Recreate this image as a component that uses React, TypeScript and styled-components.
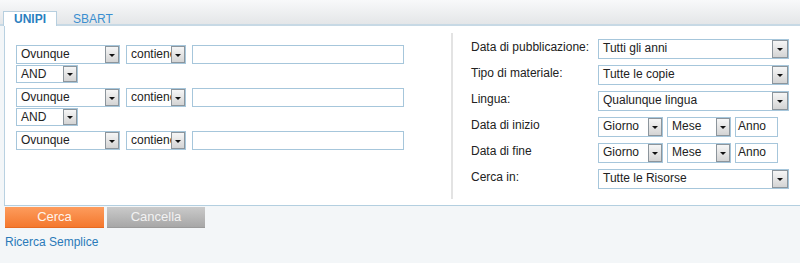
import React from "react";
import styled, { createGlobalStyle } from "styled-components";

const GlobalStyle = createGlobalStyle`
  html, body {
    margin: 0;
    padding: 0;
    background: #f3f6f8;
    font-family: "Liberation Sans", Arial, sans-serif;
    font-size: 12px;
    color: #222;
  }
`;

const Page = styled.div`
  width: 800px;
  height: 263px;
  overflow: hidden;
`;

const TabBar = styled.div`
  height: 24px;
  display: flex;
  align-items: flex-end;
  padding-left: 3px;
  background: linear-gradient(#f8f9fa, #e4e6e8);
  border-bottom: 2px solid #c7d9e5;
`;

const Tab = styled.div<{ $active?: boolean }>`
  box-sizing: border-box;
  height: 15px;
  line-height: 14px;
  margin-bottom: -2px;
  font-size: 12px;
  padding: ${(p) => (p.$active ? "0 10px" : "0 15px")};
  font-weight: ${(p) => (p.$active ? "bold" : "normal")};
  color: ${(p) => (p.$active ? "#2a7fc0" : "#3a8fd0")};
  background: ${(p) => (p.$active ? "#fff" : "transparent")};
  border: ${(p) => (p.$active ? "1px solid #b7cfdf" : "1px solid transparent")};
  border-bottom: none;
  position: relative;
`;

const Panel = styled.div`
  margin-left: 4px;
  height: 180px;
  box-sizing: border-box;
  background: #fff;
  border-left: 1px solid #b9d1e1;
  border-bottom: 1px solid #b3cfe0;
  display: grid;
  grid-template-columns: 446px 2px 1fr;
`;

const LeftCol = styled.div`
  padding: 19px 0 0 11px;
  display: flex;
  flex-direction: column;
  align-items: flex-start;
`;

const CondRow = styled.div<{ $first?: boolean }>`
  display: flex;
  align-items: flex-start;
  gap: 6px;
  margin-top: ${(p) => (p.$first ? "0" : "5px")};
`;

const Divider = styled.div`
  background: #e3e3e3;
  margin: 7px 0 6px;
`;

const RightCol = styled.div`
  padding: 13px 0 0 18px;
  display: flex;
  flex-direction: column;
  gap: 7px;
`;

const FieldRow = styled.div`
  display: flex;
  align-items: center;
  height: 19px;
`;

const Label = styled.div`
  width: 127px;
  flex: none;
  font-size: 12px;
  color: #222;
  margin-top: -3px;
`;

const DateGroup = styled.div`
  display: flex;
  gap: 4px;
`;

const SelectBox = styled.div<{ $w: number; $h: number; $mt?: number }>`
  position: relative;
  box-sizing: border-box;
  width: ${(p) => p.$w}px;
  height: ${(p) => p.$h}px;
  margin-top: ${(p) => p.$mt ?? 0}px;
  border: 1px solid #a6c6db;
  background: #fff;
  overflow: hidden;
  flex: none;
`;

const SelectText = styled.div`
  padding-left: 4px;
  font-size: 12px;
  line-height: 16px;
  color: #222;
  white-space: nowrap;
`;

const Arrow = styled.div<{ $w: number }>`
  position: absolute;
  top: 0;
  right: 0;
  bottom: 0;
  width: ${(p) => p.$w}px;
  box-sizing: border-box;
  border: 1px solid #8c959c;
  background: linear-gradient(#f6f6f6, #d4d4d4);
  display: flex;
  align-items: center;
  justify-content: center;
  &::after {
    content: "";
    border-left: 3px solid transparent;
    border-right: 3px solid transparent;
    border-top: 3px solid #111;
    margin-top: 1px;
  }
`;

const TextInput = styled.div<{ $w: number; $h: number }>`
  box-sizing: border-box;
  width: ${(p) => p.$w}px;
  height: ${(p) => p.$h}px;
  border: 1px solid #a6c6db;
  background: #fff;
  padding-left: 2px;
  font-size: 12px;
  line-height: 17px;
  color: #222;
  flex: none;
`;

const ButtonRow = styled.div`
  display: flex;
  gap: 3px;
  padding: 1px 0 0 5px;
`;

const Button = styled.div<{ $primary?: boolean }>`
  box-sizing: border-box;
  width: ${(p) => (p.$primary ? 99 : 98)}px;
  height: 21px;
  line-height: 20px;
  text-align: center;
  font-size: 13px;
  color: ${(p) => (p.$primary ? "#fff4ec" : "#f2f2f2")};
  background: ${(p) =>
    p.$primary
      ? "linear-gradient(#fd9c5d, #f4782e)"
      : "linear-gradient(#cacaca, #a7a7a7)"};
  border-bottom: 1px solid ${(p) => (p.$primary ? "#e66a22" : "#9a9a9a")};
`;

const Link = styled.a`
  display: block;
  margin: 7px 0 0 5px;
  font-size: 12px;
  line-height: 14px;
  color: #2a7ab8;
  text-decoration: none;
`;

type SelProps = { w: number; h: number; text: string; arrow?: number; mt?: number };
const Select = ({ w, h, text, arrow = 14, mt }: SelProps) => (
  <SelectBox $w={w} $h={h} $mt={mt}>
    <SelectText>{text}</SelectText>
    <Arrow $w={arrow} />
  </SelectBox>
);

const Condition = ({ first }: { first?: boolean }) => (
  <CondRow $first={first}>
    <Select w={104} h={19} text="Ovunque" />
    <Select w={60} h={19} text="contiene" />
    <TextInput $w={212} $h={19} />
  </CondRow>
);

export default function App() {
  return (
    <Page>
      <GlobalStyle />
      <TabBar>
        <Tab $active>UNIPI</Tab>
        <Tab>SBART</Tab>
      </TabBar>
      <Panel>
        <LeftCol>
          <Condition first />
          <Select w={62} h={18} text="AND" mt={1} />
          <Condition />
          <Select w={62} h={18} text="AND" mt={1} />
          <Condition />
        </LeftCol>
        <Divider />
        <RightCol>
          <FieldRow>
            <Label>Data di pubblicazione:</Label>
            <Select w={191} h={20} text="Tutti gli anni" arrow={16} />
          </FieldRow>
          <FieldRow>
            <Label>Tipo di materiale:</Label>
            <Select w={191} h={20} text="Tutte le copie" arrow={16} />
          </FieldRow>
          <FieldRow>
            <Label>Lingua:</Label>
            <Select w={191} h={20} text="Qualunque lingua" arrow={16} />
          </FieldRow>
          <FieldRow>
            <Label>Data di inizio</Label>
            <DateGroup>
              <Select w={65} h={20} text="Giorno" />
              <Select w={64} h={20} text="Mese" />
              <TextInput $w={43} $h={20}>Anno</TextInput>
            </DateGroup>
          </FieldRow>
          <FieldRow>
            <Label>Data di fine</Label>
            <DateGroup>
              <Select w={65} h={20} text="Giorno" />
              <Select w={64} h={20} text="Mese" />
              <TextInput $w={43} $h={20}>Anno</TextInput>
            </DateGroup>
          </FieldRow>
          <FieldRow>
            <Label>Cerca in:</Label>
            <Select w={191} h={20} text="Tutte le Risorse" arrow={16} />
          </FieldRow>
        </RightCol>
      </Panel>
      <ButtonRow>
        <Button $primary>Cerca</Button>
        <Button>Cancella</Button>
      </ButtonRow>
      <Link href="#">Ricerca Semplice</Link>
    </Page>
  );
}
